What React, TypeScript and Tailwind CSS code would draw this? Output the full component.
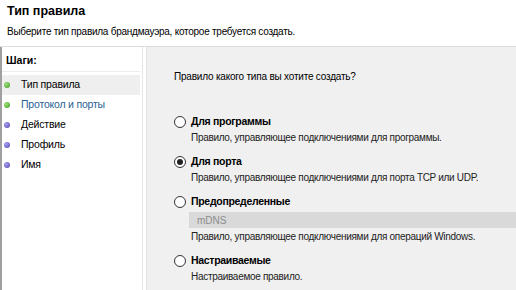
import React from "react";

const steps = [
  { label: "Тип правила", done: true, active: true },
  { label: "Протокол и порты", done: true, current: true },
  { label: "Действие" },
  { label: "Профиль" },
  { label: "Имя" },
];

function Dot({ green }: { green?: boolean }) {
  return (
    <span
      className={
        green
          ? "w-[6px] h-[6px] rounded-full bg-[radial-gradient(circle_at_35%_35%,#9de07a,#3f9a25)]"
          : "w-[6px] h-[6px] rounded-full bg-[radial-gradient(circle_at_35%_35%,#a9a2f0,#4d43b0)]"
      }
    />
  );
}

function Radio({ checked }: { checked?: boolean }) {
  return (
    <span className="w-[12px] h-[12px] rounded-full border border-[#333] bg-white flex items-center justify-center shrink-0">
      {checked && <span className="w-[6px] h-[6px] rounded-full bg-[#222]" />}
    </span>
  );
}

function Option({
  title,
  desc,
  checked,
  children,
}: {
  title: string;
  desc: string;
  checked?: boolean;
  children?: React.ReactNode;
}) {
  return (
    <div className="flex flex-col">
      <div className="flex items-center gap-[5px] h-[14px]">
        <Radio checked={checked} />
        <span className="font-bold text-[10.5px] text-black tracking-[-0.3px]">{title}</span>
      </div>
      <div className="pl-[17px] flex flex-col">
        {children}
        <span className="text-[10px] text-[#222] mt-[2px] leading-[14px] whitespace-nowrap tracking-[-0.3px]">
          {desc}
        </span>
      </div>
    </div>
  );
}

export default function App() {
  return (
    <div
      className="w-[516px] h-[290px] overflow-hidden bg-white flex flex-col"
      style={{ fontFamily: "'Liberation Sans', Arial, sans-serif" }}
    >
      <div className="h-[47px] border-b border-[#dcdcdc] px-[7px] pt-[2px] flex flex-col">
        <div className="text-[12.5px] font-bold text-black leading-[18px]">Тип правила</div>
        <div className="text-[10px] text-black mt-[5px] leading-[14px] whitespace-nowrap tracking-[-0.25px]">
          Выберите тип правила брандмауэра, которое требуется создать.
        </div>
      </div>
      <div className="flex flex-1 min-h-0">
        <div className="w-[142px] border-l-2 border-[#a0a0a0] flex flex-col pt-[3px] pr-[2px]">
          <div className="h-[22px] flex items-center px-[4px] text-[10.5px] font-bold text-black border-b border-[#ececec]">
            Шаги:
          </div>
          <div className="flex flex-col mt-[3px]">
            {steps.map((s) => (
              <div
                key={s.label}
                className={
                  "h-[20px] flex items-center gap-[11px] pl-[2px] text-[10.5px] tracking-[-0.2px] " +
                  (s.active ? "bg-[#efefef] " : "") +
                  (s.current ? "text-[#2a5f94]" : "text-black")
                }
              >
                <Dot green={s.done} />
                {s.label}
              </div>
            ))}
          </div>
        </div>
        <div className="w-[5px] border-l border-r border-[#e4e4e4] bg-white" />
        <div className="flex-1 bg-[#f0f0f0] pl-[27px] pt-[23px] flex flex-col">
          <div className="text-[10px] text-black leading-[14px] tracking-[-0.2px]">
            Правило какого типа вы хотите создать?
          </div>
          <div className="flex flex-col gap-[10px] mt-[31px]">
            <Option title="Для программы" desc="Правило, управляющее подключениями для программы." />
            <Option
              title="Для порта"
              checked
              desc="Правило, управляющее подключениями для порта TCP или UDP."
            />
            <Option
              title="Предопределенные"
              desc="Правило, управляющее подключениями для операций Windows."
            >
              <div className="h-[16px] bg-[#d9d9d9] mt-[3px] ml-[-2px] flex items-center pl-[8px] text-[10px] text-[#8c8c8c]">
                mDNS
              </div>
            </Option>
            <Option title="Настраиваемые" desc="Настраиваемое правило." />
          </div>
        </div>
      </div>
    </div>
  );
}
